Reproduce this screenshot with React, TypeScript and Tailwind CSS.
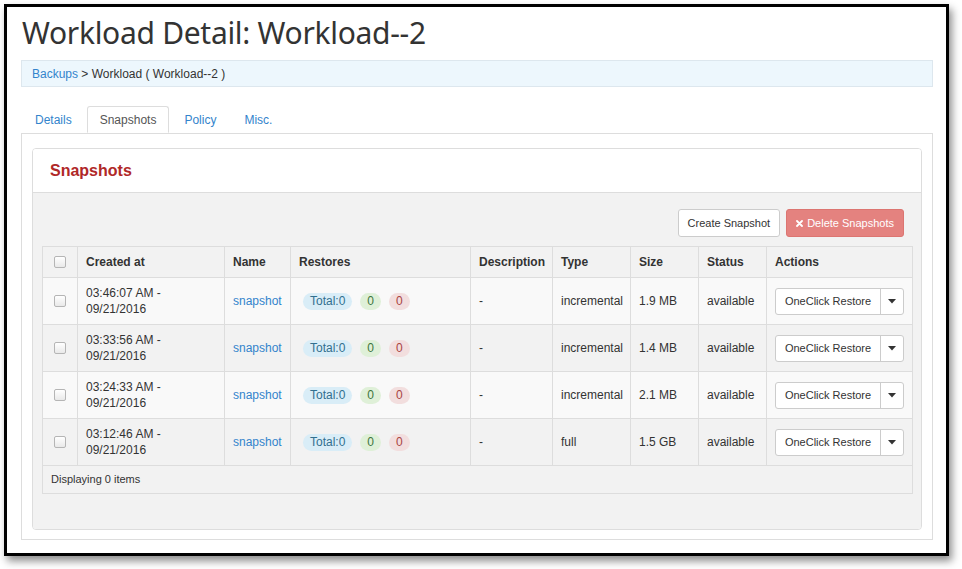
import React from 'react';

const rows = [
    { time: '03:46:07 AM -', date: '09/21/2016', type: 'incremental', size: '1.9 MB' },
    { time: '03:33:56 AM -', date: '09/21/2016', type: 'incremental', size: '1.4 MB' },
    { time: '03:24:33 AM -', date: '09/21/2016', type: 'incremental', size: '2.1 MB' },
    { time: '03:12:46 AM -', date: '09/21/2016', type: 'full', size: '1.5 GB' },
];

const tabs = ['Details', 'Snapshots', 'Policy', 'Misc.'];

function CheckBox() {
    return <span className="block w-[12px] h-[12px] mx-auto rounded-[2px] border border-[#b5b5b5] bg-gradient-to-b from-white to-[#e9e9e9]" />;
}

function Caret() {
    return (
        <svg width="8" height="5" viewBox="0 0 8 5">
            <path d="M0 0 L8 0 L4 4.5 Z" fill="#333" />
        </svg>
    );
}

export default function App() {
    return (
        <div className="w-[962px] h-[569px] bg-white overflow-hidden" style={{ fontFamily: '"Liberation Sans", Arial, sans-serif' }}>
            <div className="ml-[4px] mt-[4px] w-[945px] h-[552px] border-[3px] border-black bg-white shadow-[3px_5px_8px_rgba(0,0,0,0.45)]">
                <h1 className="pl-[15px] pt-[8px] text-[30px] leading-[36px] tracking-[-0.3px] text-[#333] font-normal" style={{ fontFamily: '"Noto Sans", sans-serif' }}>
                    Workload Detail: Workload--2
                </h1>

                <div className="ml-[14px] mr-[13px]">
                    {/* breadcrumb */}
                    <div className="mt-[9px] h-[27px] flex items-center pl-[10px] bg-[#edf7fd] border border-[#dde7ee] text-[12px] text-[#333]">
                        <span className="text-[#3384cc]">Backups</span>
                        <span>&nbsp;&gt; Workload ( Workload--2 )</span>
                    </div>

                    {/* tabs */}
                    <div className="mt-[19px] flex gap-[2px] pl-px">
                        {tabs.map(t => (
                            t === 'Snapshots' ? (
                                <div key={t} className="relative z-10 -mb-px h-[27px] flex items-center px-[12px] border border-[#ddd] border-b-white bg-white text-[12px] text-[#555] rounded-t-[3px]">
                                    {t}
                                </div>
                            ) : (
                                <div key={t} className="h-[27px] flex items-center px-[13px] text-[12px] text-[#3384cc]">
                                    {t}
                                </div>
                            )
                        ))}
                    </div>

                    {/* tab content */}
                    <div className="border border-[#ddd] pt-[14px] pb-[9px] px-[10px]">
                        <div className="border border-[#ddd] rounded-[4px] overflow-hidden">
                            <div className="h-[44px] flex items-center pl-[17px] bg-white border-b border-[#ddd]">
                                <span className="text-[16px] font-bold text-[#b02828]">Snapshots</span>
                            </div>
                            <div className="bg-[#f2f2f2] pt-[16px] pb-[35px]">
                                <div className="flex justify-end gap-[6px] pr-[17px]">
                                    <button className="h-[28px] px-[9px] bg-white border border-[#ccc] rounded-[3px] text-[11px] text-[#333]">
                                        Create Snapshot
                                    </button>
                                    <button className="h-[28px] px-[9px] flex items-center gap-[4px] bg-[#e4827f] border border-[#dc7571] rounded-[3px] text-[11px] text-white">
                                        <svg width="7" height="7" viewBox="0 0 7 7">
                                            <path d="M1 1 L6 6 M6 1 L1 6" stroke="white" strokeWidth="1.8" strokeLinecap="round" />
                                        </svg>
                                        Delete Snapshots
                                    </button>
                                </div>

                                <table className="mt-[9px] ml-[9px] w-[870px] table-fixed border-collapse text-[12px] text-[#333]">
                                    <colgroup>
                                        <col className="w-[35px]" />
                                        <col className="w-[147px]" />
                                        <col className="w-[66px]" />
                                        <col className="w-[180px]" />
                                        <col className="w-[82px]" />
                                        <col className="w-[78px]" />
                                        <col className="w-[68px]" />
                                        <col className="w-[68px]" />
                                        <col className="w-[146px]" />
                                    </colgroup>
                                    <thead>
                                        <tr className="h-[31px] bg-[#f2f2f2]">
                                            <th className="border border-[#ddd]"><CheckBox /></th>
                                            <th className="border border-[#ddd] text-left font-bold px-[8px]">Created at</th>
                                            <th className="border border-[#ddd] text-left font-bold px-[8px]">Name</th>
                                            <th className="border border-[#ddd] text-left font-bold px-[8px]">Restores</th>
                                            <th className="border border-[#ddd] text-left font-bold px-[8px] whitespace-nowrap">Description</th>
                                            <th className="border border-[#ddd] text-left font-bold px-[8px]">Type</th>
                                            <th className="border border-[#ddd] text-left font-bold px-[8px]">Size</th>
                                            <th className="border border-[#ddd] text-left font-bold px-[8px]">Status</th>
                                            <th className="border border-[#ddd] text-left font-bold px-[8px]">Actions</th>
                                        </tr>
                                    </thead>
                                    <tbody>
                                        {rows.map((r, i) => (
                                            <tr key={r.time} className={`h-[47px] ${i % 2 === 0 ? 'bg-[#f9f9f9]' : 'bg-[#f2f2f2]'}`}>
                                                <td className="border border-[#ddd]"><CheckBox /></td>
                                                <td className="border border-[#ddd] px-[8px] leading-[16px]">
                                                    <div>{r.time}</div>
                                                    <div>{r.date}</div>
                                                </td>
                                                <td className="border border-[#ddd] px-[8px] text-[#3384cc]">snapshot</td>
                                                <td className="border border-[#ddd] pl-[12px]">
                                                    <div className="flex gap-[8px]">
                                                        <span className="h-[17px] px-[7px] rounded-full bg-[#d9edf7] text-[#31708f] leading-[17px]">Total:0</span>
                                                        <span className="h-[17px] px-[7px] rounded-full bg-[#dff0d8] text-[#3c763d] leading-[17px]">0</span>
                                                        <span className="h-[17px] px-[7px] rounded-full bg-[#f2dede] text-[#a94442] leading-[17px]">0</span>
                                                    </div>
                                                </td>
                                                <td className="border border-[#ddd] px-[8px]">-</td>
                                                <td className="border border-[#ddd] px-[8px]">{r.type}</td>
                                                <td className="border border-[#ddd] px-[8px]">{r.size}</td>
                                                <td className="border border-[#ddd] px-[8px]">available</td>
                                                <td className="border border-[#ddd] pl-[8px] pr-[8px]">
                                                    <div className="flex h-[27px] bg-white border border-[#ccc] rounded-[3px] text-[11px]">
                                                        <div className="w-[105px] flex items-center justify-center border-r border-[#ccc]">OneClick Restore</div>
                                                        <div className="flex-1 flex items-center justify-center"><Caret /></div>
                                                    </div>
                                                </td>
                                            </tr>
                                        ))}
                                        <tr className="h-[28px] bg-[#f2f2f2]">
                                            <td colSpan={9} className="border border-[#ddd] px-[8px] text-[11px]">Displaying 0 items</td>
                                        </tr>
                                    </tbody>
                                </table>
                            </div>
                        </div>
                    </div>
                </div>
            </div>
        </div>
    );
}
